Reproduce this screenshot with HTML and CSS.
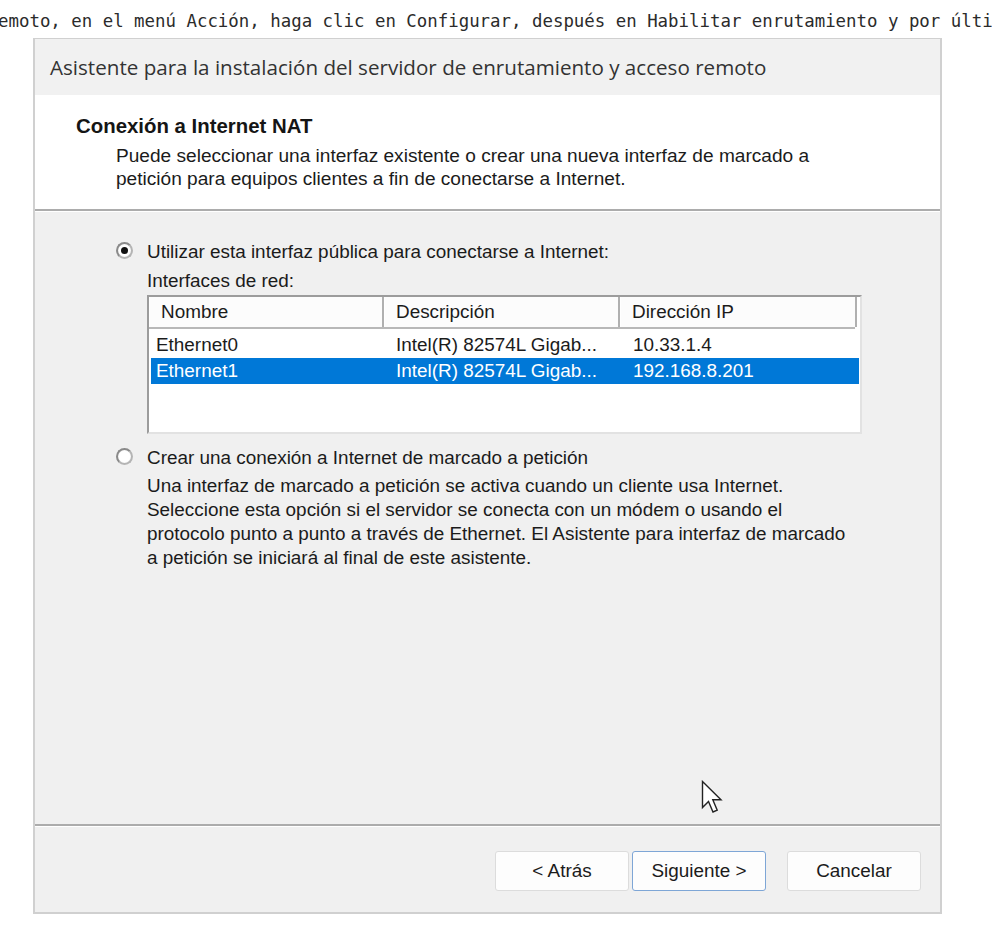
FILE: index.html
```html
<!DOCTYPE html>
<html lang="es">
<head>
    <meta charset="UTF-8">
    <meta name="viewport" content="width=device-width, initial-scale=1.0">
    <title>Conexión a Internet NAT</title>
    <link rel="stylesheet" href="styles.css">
</head>
<body>
    <div class="caption">emoto, en el menú Acción, haga clic en Configurar, después en Habilitar enrutamiento y por último</div>

    <div class="wizard">
        <div class="wizard-title">Asistente para la instalación del servidor de enrutamiento y acceso remoto</div>

        <div class="wizard-head">
            <h2>Conexión a Internet NAT</h2>
            <p>Puede seleccionar una interfaz existente o crear una nueva interfaz de marcado a<br>petición para equipos clientes a fin de conectarse a Internet.</p>
        </div>
        <div class="sep"></div>

        <div class="wizard-body">
            <div class="option first">
                <span class="radio checked"></span>
                <span>Utilizar esta interfaz pública para conectarse a Internet:</span>
            </div>
            <div class="indent">
                <div class="list-label">Interfaces de red:</div>
                <div class="list">
                    <div class="list-row list-head">
                        <div>Nombre</div>
                        <div>Descripción</div>
                        <div>Dirección IP</div>
                    </div>
                    <div class="list-row item">
                        <div>Ethernet0</div>
                        <div>Intel(R) 82574L Gigab...</div>
                        <div>10.33.1.4</div>
                    </div>
                    <div class="list-row item selected">
                        <div>Ethernet1</div>
                        <div>Intel(R) 82574L Gigab...</div>
                        <div>192.168.8.201</div>
                    </div>
                </div>
            </div>

            <div class="option second">
                <span class="radio"></span>
                <span>Crear una conexión a Internet de marcado a petición</span>
            </div>
            <p class="indent note">Una interfaz de marcado a petición se activa cuando un cliente usa Internet.<br>Seleccione esta opción si el servidor se conecta con un módem o usando el<br>protocolo punto a punto a través de Ethernet. El Asistente para interfaz de marcado<br>a petición se iniciará al final de este asistente.</p>

            <svg class="pointer" width="24" height="36" viewBox="0 0 24 36">
                <path d="M1.5 1.5 L1.5 27.5 L7.5 21.5 L12 32 L16.2 30.2 L11.8 19.8 L20 19.8 Z" fill="#fff" stroke="#222" stroke-width="1.4" stroke-linejoin="miter"/>
            </svg>
        </div>
        <div class="sep"></div>

        <div class="wizard-buttons">
            <button>&lt; Atrás</button>
            <button class="default">Siguiente &gt;</button>
            <button class="cancel">Cancelar</button>
        </div>
    </div>
</body>
</html>
```
FILE: styles.css
```css
body {
    margin: 0;
    background: #fff;
    overflow: hidden;
    font-family: "Liberation Sans", Arial, sans-serif;
    color: #1b1b1b;
}
.caption {
    font-family: "DejaVu Sans Mono", monospace;
    font-size: 17.4px;
    line-height: 20px;
    color: #2b2b2b;
    white-space: nowrap;
    overflow: hidden;
    margin-left: -2px;
    padding-top: 11px;
    height: 27px;
}
.wizard {
    margin-left: 33px;
    width: 905px;
    border: 1px solid #d0d0d0;
    border-width: 1px 2px 2px 2px;
    background: #f0f0f0;
}
.wizard-title {
    height: 56px;
    padding-left: 15px;
    display: flex;
    align-items: center;
    font-family: "Open Sans", sans-serif;
    font-size: 20.6px;
    color: #333;
    background: #f1f1f1;
}
.wizard-head {
    background: #fff;
    height: 114px;
    padding-left: 41px;
    box-sizing: border-box;
    padding-top: 19px;
}
.wizard-head h2 {
    margin: 0;
    font-size: 20.4px;
    line-height: 24px;
    font-weight: bold;
    color: #151515;
}
.wizard-head p {
    margin: 6px 0 0 40px;
    font-size: 19.1px;
    line-height: 23px;
}
.sep {
    border-top: 2px solid #acacac;
    border-bottom: 1px solid #fff;
}
.wizard-body {
    position: relative;
    height: 612px;
    padding-left: 81px;
    box-sizing: border-box;
    font-size: 18.9px;
}
.option {
    display: flex;
    align-items: center;
    gap: 14px;
    line-height: 24px;
}
.option.first {
    padding-top: 28px;
}
.option.second {
    margin-top: 12px;
}
.radio {
    width: 13px;
    height: 13px;
    border-radius: 50%;
    border: 2px solid #b4b4b4;
    border-top-color: #8a8a8a;
    border-left-color: #8a8a8a;
    background: radial-gradient(circle, #fff 55%, #e6e6e6 100%);
    display: flex;
    align-items: center;
    justify-content: center;
    flex: none;
    margin-top: -3px;
}
.radio.checked::after {
    content: "";
    width: 7px;
    height: 7px;
    border-radius: 50%;
    background: #111;
}
.indent {
    margin-left: 31px;
}
.list-label {
    line-height: 24px;
    margin-top: 5px;
}
.list {
    margin-top: 2px;
    width: 715px;
    height: 139px;
    box-sizing: border-box;
    background: #fff;
    border-top: 2px solid #9c9c9c;
    border-left: 2px solid #9c9c9c;
    border-right: 2px solid #e2e2e2;
    border-bottom: 2px solid #e2e2e2;
}
.list-row {
    display: grid;
    grid-template-columns: 235px 236px 237px;
}
.list-head {
    height: 30px;
    background: #fcfcfc;
    border-bottom: 2px solid #b8b8b8;
    margin-right: 5px;
    margin-bottom: 3px;
}
.list-head div {
    line-height: 30px;
    padding-left: 11px;
    border-left: 1px solid #fff;
    border-right: 2px solid #b0b0b0;
}
.item {
    height: 26px;
    line-height: 26px;
    margin-left: 2px;
    margin-right: 1px;
}
.item div {
    padding-left: 10px;
    white-space: nowrap;
}
.item div:first-child {
    padding-left: 5px;
}
.item div:last-child {
    padding-left: 11px;
}
.item.selected {
    background: #0078d7;
    color: #fff;
}
.note {
    margin-top: 4px;
    margin-bottom: 0;
    line-height: 24px;
}
.pointer {
    position: absolute;
    left: 666px;
    top: 568px;
}
.wizard-buttons {
    height: 85px;
    display: flex;
    justify-content: flex-end;
    padding: 24px 19px 0 0;
    box-sizing: border-box;
}
button {
    width: 134px;
    height: 40px;
    margin-left: 3px;
    background: #fdfdfd;
    border: 1px solid #dcdcdc;
    border-radius: 3px;
    font-family: "Liberation Sans", Arial, sans-serif;
    font-size: 18.9px;
    color: #1b1b1b;
}
button.default {
    border-color: #7ea6d6;
}
button.cancel {
    margin-left: 21px;
}
```
